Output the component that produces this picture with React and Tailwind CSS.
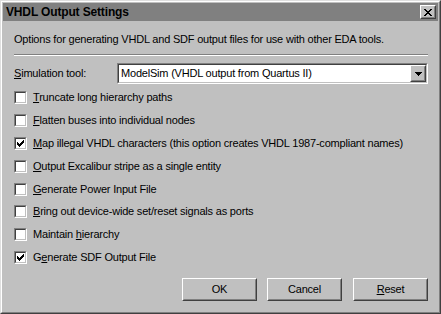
import React from "react";

function Pix({ rows, className }) {
  const rects = [];
  rows.forEach((r, y) =>
    [...r].forEach((c, x) => {
      if (c === "#") rects.push(<rect key={x + "-" + y} x={x} y={y} width="1" height="1" />);
    })
  );
  return (
    <svg
      width={rows[0].length}
      height={rows.length}
      viewBox={`0 0 ${rows[0].length} ${rows.length}`}
      shapeRendering="crispEdges"
      fill="currentColor"
      className={className}
    >
      {rects}
    </svg>
  );
}

const CHECK = [
  "......#",
  ".....##",
  "#...###",
  "##.###.",
  "#####..",
  ".###...",
  "..#....",
];

const XMARK = [
  "##....##",
  ".##..##.",
  "..####..",
  "...##...",
  "..####..",
  ".##..##.",
  "##....##",
];

const ARROW = ["#######", ".#####.", "..###..", "...#..."];

function Raised({ className = "", children }) {
  return (
    <div className={"border border-t-white border-l-white border-r-[#404040] border-b-[#404040] flex " + className}>
      <div className="flex-1 border border-t-[#c0c0c0] border-l-[#c0c0c0] border-r-[#808080] border-b-[#808080] bg-[#c0c0c0] flex items-center justify-center">
        {children}
      </div>
    </div>
  );
}

function Checkbox({ checked }) {
  return (
    <div className="w-[13px] h-[13px] shrink-0 border border-t-[#808080] border-l-[#808080] border-b-white border-r-white flex">
      <div className="flex-1 border border-t-[#404040] border-l-[#404040] border-b-[#c0c0c0] border-r-[#c0c0c0] bg-white flex items-center justify-center">
        {checked && <Pix rows={CHECK} className="text-black" />}
      </div>
    </div>
  );
}

function Row({ h, checked, children }) {
  return (
    <div className={"flex items-center gap-[6px] " + h}>
      <Checkbox checked={checked} />
      <span className="whitespace-nowrap leading-[13px]">{children}</span>
    </div>
  );
}

export default function App() {
  return (
    <div className="w-[441px] h-[314px] overflow-hidden bg-[#c0c0c0] border border-t-[#dfdfdf] border-l-[#dfdfdf] border-r-[#404040] border-b-[#404040] flex text-black text-[11px] tracking-[-0.2px] font-[family-name:'Liberation_Sans',Arial,sans-serif]">
      <div className="flex-1 min-w-0 border border-t-white border-l-white border-r-[#808080] border-b-[#808080] p-px flex flex-col">
        <div className="h-[18px] bg-[#808080] flex items-center justify-between pl-[3px] pr-[2px]">
          <span className="font-bold text-[12px] tracking-[-0.15px] leading-[14px]">VHDL Output Settings</span>
          <Raised className="w-[16px] h-[14px]">
            <Pix rows={XMARK} className="text-black" />
          </Raised>
        </div>
        <div className="pl-[11px] pr-[10px] flex flex-col min-w-0">
          <div className="mt-[12px] h-[13px] leading-[13px] whitespace-nowrap">
            Options for generating VHDL and SDF output files for use with other EDA tools.
          </div>
          <div className="mt-[8px] h-[2px] border-t border-t-[#808080] border-b border-b-white" />
          <div className="mt-[7px] h-[21px] flex items-center">
            <span className="w-[103px] leading-[13px]">
              <u>S</u>imulation tool:
            </span>
            <div className="w-[311px] h-[21px] border border-t-[#808080] border-l-[#808080] border-b-white border-r-white flex">
              <div className="flex-1 border border-t-[#404040] border-l-[#404040] border-b-[#c0c0c0] border-r-[#c0c0c0] bg-white flex items-center pl-[2px]">
                <span className="flex-1 whitespace-nowrap leading-[13px]">ModelSim (VHDL output from Quartus II)</span>
                <Raised className="w-[16px] h-[17px]">
                  <Pix rows={ARROW} className="text-black" />
                </Raised>
              </div>
            </div>
          </div>
          <div className="mt-[2px] flex flex-col">
            <Row h="h-[23px]">
              <u>T</u>runcate long hierarchy paths
            </Row>
            <Row h="h-[23px]">
              <u>F</u>latten buses into individual nodes
            </Row>
            <Row h="h-[23px]" checked>
              <u>M</u>ap illegal VHDL characters (this option creates VHDL 1987-compliant names)
            </Row>
            <Row h="h-[23px]">
              <u>O</u>utput Excalibur stripe as a single entity
            </Row>
            <Row h="h-[22px]">
              <u>G</u>enerate Power Input File
            </Row>
            <Row h="h-[23px]">
              <u>B</u>ring out device-wide set/reset signals as ports
            </Row>
            <Row h="h-[23px]">
              Maintain <u>h</u>ierarchy
            </Row>
            <Row h="h-[23px]" checked>
              G<u>e</u>nerate SDF Output File
            </Row>
          </div>
          <div className="mt-[9px] flex justify-end">
            <Raised className="w-[75px] h-[23px]">
              <span className="leading-[13px]">OK</span>
            </Raised>
            <Raised className="w-[75px] h-[23px] ml-[10px]">
              <span className="leading-[13px]">Cancel</span>
            </Raised>
            <Raised className="w-[75px] h-[23px] ml-[11px]">
              <span className="leading-[13px]">
                <u>R</u>eset
              </span>
            </Raised>
          </div>
        </div>
      </div>
    </div>
  );
}
